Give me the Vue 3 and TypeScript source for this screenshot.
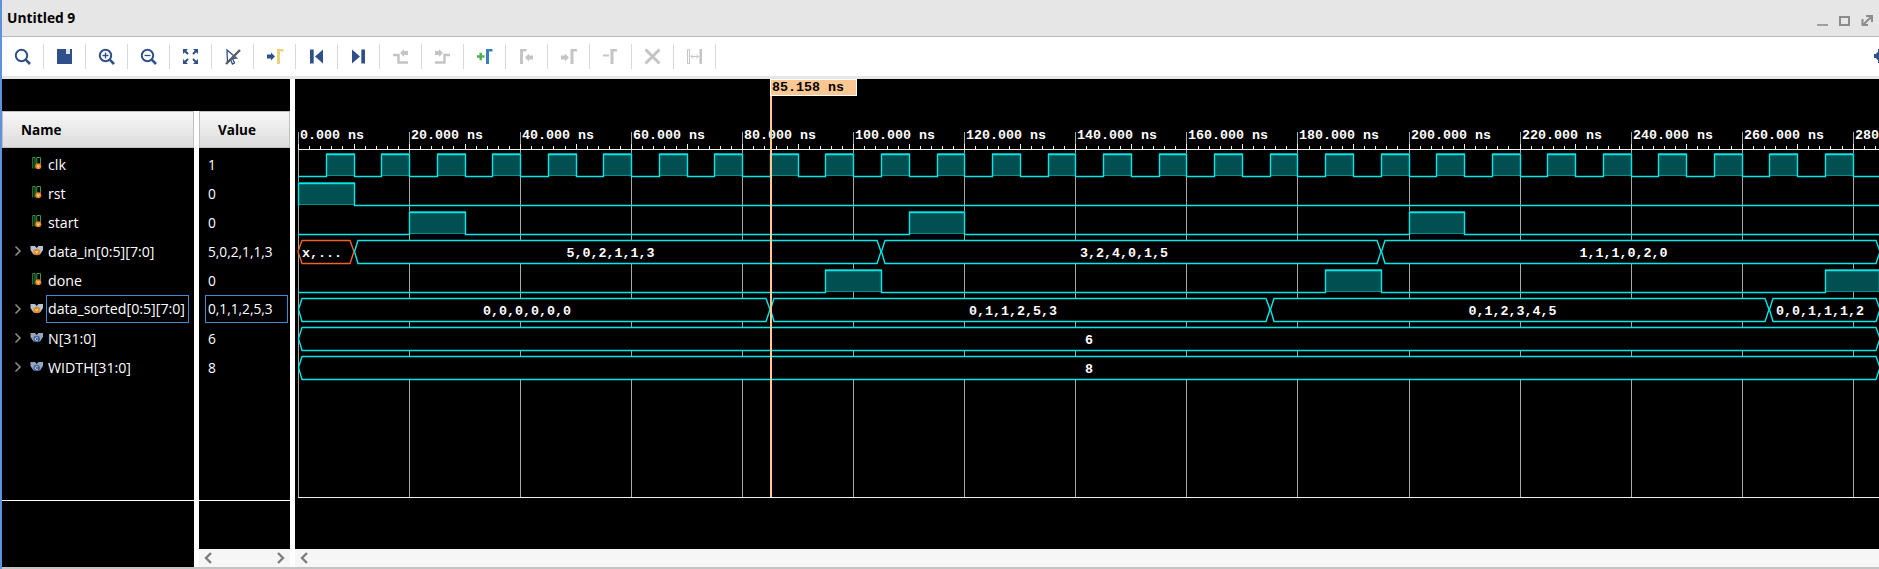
<template>
  <div class="window">
    <header class="title-bar">
      <span class="title">Untitled 9</span>
      <svg class="win-controls" width="58" height="16" viewBox="0 0 58 16">
        <rect x="2" y="14" width="11" height="2" fill="#a0a0a0" />
        <rect x="25" y="7" width="9" height="8" fill="none" stroke="#8c8c8c" stroke-width="2" />
        <path d="M47.5 9V15H53M51 6H57V12M49 14L56 7" fill="none" stroke="#8c8c8c" stroke-width="2" />
      </svg>
    </header>

    <div class="toolbar">
      <div v-for="tool in tools" :key="tool.id" class="tool">
        <svg width="25" height="25" viewBox="0 0 25 25" v-html="tool.svg"></svg>
      </div>
      <svg class="gear" width="5" height="14" viewBox="0 0 5 14">
        <circle cx="6" cy="7" r="4.5" fill="#2f5088" />
        <path d="M4 0H8V14H4ZM0 5H5V9H0Z" fill="#2f5088" />
      </svg>
    </div>

    <div class="panes">
      <section class="pane name-pane">
        <div class="spacer"></div>
        <div class="col-head name-head">Name</div>
        <div class="rows">
          <div v-for="s in signals" :key="s.name" class="row">
            <svg v-if="s.expandable" class="chev" width="8" height="12" viewBox="0 0 8 12">
              <path d="M1.5 1.5L6 6L1.5 10.5" fill="none" stroke="#8a8a8a" stroke-width="1.6" />
            </svg>
            <svg class="sig-icon" width="15" height="15" viewBox="0 0 15 15">
              <template v-if="s.kind === 'bit'">
                <path d="M2.8 11.5V0.5H5V11.5M6.8 8V0.5H10.5V7" fill="none" stroke="#3c9a48" stroke-width="1" />
                <circle cx="8.3" cy="9.3" r="3" fill="#e8871e" />
                <path d="M7.3 8.3L8.3 10.5L9.3 8.3" fill="none" stroke="#fff" stroke-width="0.7" />
              </template>
              <template v-else>
                <path d="M0.5 2H5L6.7 4L8.5 2H13V6L10 10.5H3.5L0.5 6Z" :fill="s.kind === 'bus' ? '#b0c4d6' : '#95a6ba'" />
                <circle cx="6.7" cy="8" r="3.3" :fill="s.kind === 'bus' ? '#e8871e' : '#44609a'" />
                <path v-if="s.kind === 'bus'" d="M5.7 7L6.7 9.2L7.7 7" fill="none" stroke="#fff" stroke-width="0.7" />
                <path v-else d="M7.9 7.1A1.5 1.5 0 1 0 7.9 8.9" fill="none" stroke="#fff" stroke-width="0.7" />
              </template>
            </svg>
            <span class="label" :class="{ selected: s.selected }">{{ s.name }}</span>
          </div>
        </div>
        <div class="pane-foot"></div>
      </section>

      <section class="pane value-pane">
        <div class="spacer"></div>
        <div class="col-head value-head">Value</div>
        <div class="rows">
          <div v-for="s in signals" :key="s.name" class="row value-row">
            <span class="label" :class="{ selected: s.selected }">{{ s.value }}</span>
          </div>
        </div>
        <div class="pane-foot"></div>
        <div class="scrollbar both">
          <svg width="10" height="14" viewBox="0 0 10 14"><path d="M8 2L3 7L8 12" class="scroll-arrow" /></svg>
          <svg width="10" height="14" viewBox="0 0 10 14"><path d="M2 2L7 7L2 12" class="scroll-arrow" /></svg>
        </div>
      </section>

      <section class="wave-pane">
        <svg class="wave" width="1584" height="470" viewBox="0 0 1584 470" shape-rendering="crispEdges">
          <!-- grid -->
          <line v-for="g in grid" :key="'g' + g" :x1="g" y1="53" :x2="g" y2="418" class="grid-line" />
          <line x1="3" y1="418.5" x2="1584" y2="418.5" class="ruler-line" />

          <!-- ruler -->
          <line x1="3" y1="70.5" x2="1584" y2="70.5" class="ruler-line" />
          <line v-for="t in ticks" :key="'t' + t.x" :x1="t.x" :y1="t.major ? 65 : 67" :x2="t.x" y2="70" class="ruler-line" />
          <text v-for="l in rulerLabels" :key="l.text" :x="l.x" y="60" class="mono ruler-text">{{ l.text }}</text>

          <!-- digital signals -->
          <g v-for="d in digital" :key="d.name">
            <rect
              v-for="p in d.pulses"
              :key="p.x"
              :x="p.x + 0.5"
              :y="d.low - 22.5"
              :width="p.w"
              height="22"
              class="pulse"
            />
            <path :d="d.path" class="trace" shape-rendering="auto" />
          </g>

          <!-- buses -->
          <g v-for="b in buses" :key="b.name">
            <g v-for="seg in b.segments" :key="seg.key">
              <path :d="seg.d" class="bus" :class="{ unknown: seg.unknown }" shape-rendering="auto" />
              <text :x="seg.textX" :y="b.low - 6" class="mono bus-text">{{ seg.label }}</text>
            </g>
          </g>

          <!-- cursor -->
          <rect :x="cursorX" y="0" width="2" height="418" class="cursor" />
          <rect :x="cursorX" y="0" width="86" height="16" class="cursor-flag" />
          <text :x="cursorX + 2" y="12" class="mono flag-text">85.158 ns</text>
        </svg>
        <div class="scrollbar">
          <svg width="10" height="14" viewBox="0 0 10 14"><path d="M8 2L3 7L8 12" class="scroll-arrow" /></svg>
        </div>
      </section>
    </div>
  </div>
</template>

<script setup lang="ts">
type Kind = 'bit' | 'bus' | 'const';

interface Signal {
  name: string;
  value: string;
  kind: Kind;
  expandable?: boolean;
  selected?: boolean;
}

const signals: Signal[] = [
  { name: 'clk', value: '1', kind: 'bit' },
  { name: 'rst', value: '0', kind: 'bit' },
  { name: 'start', value: '0', kind: 'bit' },
  { name: 'data_in[0:5][7:0]', value: '5,0,2,1,1,3', kind: 'bus', expandable: true },
  { name: 'done', value: '0', kind: 'bit' },
  { name: 'data_sorted[0:5][7:0]', value: '0,1,1,2,5,3', kind: 'bus', expandable: true, selected: true },
  { name: 'N[31:0]', value: '6', kind: 'const', expandable: true },
  { name: 'WIDTH[31:0]', value: '8', kind: 'const', expandable: true }
];

// waveform scale: 20 ns is 111.05 px, origin 3 px into the pane
const PX_PER_NS = 5.5525;
const ORIGIN = 3;
const WIDTH = 1584;
const END_NS = (WIDTH - ORIGIN) / PX_PER_NS;

const px = (ns: number) => Math.round(ORIGIN + ns * PX_PER_NS);

const cursorX = 475;

const grid: number[] = [];
const rulerLabels: { text: string; x: number }[] = [];
for (let ns = 0; ns <= 280; ns += 20) {
  grid.push(px(ns) + 0.5);
  rulerLabels.push({ text: `${ns}.000 ns`, x: px(ns) + 2 });
}

const ticks: { x: number; major: boolean }[] = [];
for (let i = 0; i * 2 <= 285; i++) {
  ticks.push({ x: px(i * 2) + 0.5, major: i % 5 === 0 });
}

function digitalTrace(name: string, low: number, highs: [number, number][]) {
  const top = low - 22;
  let d = `M${ORIGIN} ${low + 0.5}`;
  const pulses: { x: number; w: number }[] = [];
  for (const [from, to] of highs) {
    const a = px(from);
    const b = Math.min(px(to), WIDTH);
    d += `H${a + 0.5}V${top + 0.5}H${b + 0.5}V${low + 0.5}`;
    pulses.push({ x: a, w: b - a });
  }
  d += `H${WIDTH}`;
  return { name, low, path: d, pulses };
}

const clockHighs: [number, number][] = [];
for (let ns = 5; ns < END_NS; ns += 10) clockHighs.push([ns, ns + 5]);

const digital = [
  digitalTrace('clk', 97, clockHighs),
  digitalTrace('rst', 126, [[0, 10]]),
  digitalTrace('start', 155, [[20, 30], [110, 120], [200, 210]]),
  digitalTrace('done', 213, [[95, 105], [185, 195], [275, 300]])
];

interface BusPart {
  from: number;
  to: number;
  label: string;
  unknown?: boolean;
  at?: number;
}

function busTrace(name: string, low: number, parts: BusPart[]) {
  const top = low - 23;
  const mid = low - 11.5;
  const segments = parts.map((p, i) => {
    const x0 = px(p.from);
    const x1 = Math.min(px(p.to), WIDTH + 1);
    const ease = 4;
    const d = `M${x0 + (p.unknown ? 0 : 0.5)} ${mid}L${x0 + ease} ${top + 0.5}H${x1 - ease}L${x1} ${mid}L${x1 - ease} ${low + 0.5}H${x0 + ease}Z`;
    const center = (x0 + x1) / 2;
    const n = p.label.length;
    const textX = p.at ?? Math.max(center - 4 * n - 0.7 * (n - 1), x0 + 7);
    return { key: `${name}${i}`, d, label: p.label, unknown: p.unknown, textX };
  });
  return { name, low, segments };
}

const buses = [
  busTrace('data_in', 184, [
    { from: 0, to: 10, label: 'x,...', unknown: true, at: 7 },
    { from: 10, to: 105, label: '5,0,2,1,1,3' },
    { from: 105, to: 195, label: '3,2,4,0,1,5' },
    { from: 195, to: 300, label: '1,1,1,0,2,0' }
  ]),
  busTrace('data_sorted', 242, [
    { from: 0, to: 85, label: '0,0,0,0,0,0' },
    { from: 85, to: 175, label: '0,1,1,2,5,3' },
    { from: 175, to: 265, label: '0,1,2,3,4,5' },
    { from: 265, to: 300, label: '0,0,1,1,1,2' }
  ]),
  busTrace('N', 271, [{ from: 0, to: 300, label: '6' }]),
  busTrace('WIDTH', 300, [{ from: 0, to: 300, label: '8' }])
];

const NAVY = '#2f5088';
const GREY = '#c4c4c4';

const marker = (x: number, color: string) =>
  `<path d="M${x} 5H${x + 6.5}V7.5H${x + 3}V20H${x}Z" fill="${color}"/>`;
const arrowRight = (x: number, y: number, color: string) =>
  `<path d="M${x} ${y - 2}H${x + 4}V${y - 4}L${x + 8} ${y}L${x + 4} ${y + 4}V${y + 2}H${x}Z" fill="${color}"/>`;
const arrowLeft = (x: number, y: number, color: string) =>
  `<path d="M${x + 8} ${y - 2}H${x + 4}V${y - 4}L${x} ${y}L${x + 4} ${y + 4}V${y + 2}H${x + 8}Z" fill="${color}"/>`;
const lens = `<circle cx="11.5" cy="11.5" r="5.7" fill="none" stroke="${NAVY}" stroke-width="2"/><path d="M15.7 15.7L20 20" stroke="${NAVY}" stroke-width="2.6"/>`;

const tools = [
  { id: 'search', svg: lens },
  {
    id: 'save',
    svg: `<path d="M5 5H20V20H5Z" fill="${NAVY}"/><path d="M9 5H18V10H9Z" fill="#dfe5ef"/><path d="M9 5H14V10H9Z" fill="${NAVY}"/>`
  },
  {
    id: 'zoom-in',
    svg: `${lens}<path d="M8.5 11.5H14.5M11.5 8.5V14.5" stroke="${NAVY}" stroke-width="1.3"/>`
  },
  { id: 'zoom-out', svg: `${lens}<path d="M8.5 11.5H14.5" stroke="${NAVY}" stroke-width="1.3"/>` },
  {
    id: 'fit',
    svg: `<path d="M5 5H10L5 10ZM20 5V10L15 5ZM5 20V15L10 20ZM20 20H15L20 15Z" fill="${NAVY}"/><path d="M6 6L10 10M19 6L15 10M6 19L10 15M19 19L15 15" stroke="${NAVY}" stroke-width="2"/>`
  },
  {
    id: 'snap',
    svg: `<path d="M7 6L16.5 14L12.5 14.5L14.5 19L12.5 20L10.5 15.5L7.5 18Z" fill="#fff" stroke="${NAVY}" stroke-width="1.3"/><path d="M20 6L6 20" stroke="#5a5a5a" stroke-width="2.4"/>`
  },
  { id: 'goto-cursor', svg: arrowRight(5, 12.5, NAVY) + marker(15, '#e8d27a') },
  {
    id: 'first',
    svg: `<path d="M6 5.5H9.7V19.5H6Z" fill="${NAVY}"/><path d="M19 5.5V19.5L11 12.5Z" fill="${NAVY}"/>`
  },
  {
    id: 'last',
    svg: `<path d="M15.3 5.5H19V19.5H15.3Z" fill="${NAVY}"/><path d="M6 5.5V19.5L14 12.5Z" fill="${NAVY}"/>`
  },
  {
    id: 'prev-edge',
    svg: `<path d="M5 11H10.5V18.5H20" fill="none" stroke="${GREY}" stroke-width="2.4"/>${arrowLeft(12, 9, GREY)}`
  },
  {
    id: 'next-edge',
    svg: `<path d="M5 18.5H14.5V11H20" fill="none" stroke="${GREY}" stroke-width="2.4"/>${arrowRight(5, 9, GREY)}`
  },
  {
    id: 'add-marker',
    svg: `<path d="M5 12.5H12.5M8.7 8.7V16.3" stroke="#4fb04f" stroke-width="2.4"/>${marker(14, '#3a80b8')}`
  },
  { id: 'prev-marker', svg: marker(6, GREY) + arrowLeft(11, 13.5, GREY) },
  { id: 'next-marker', svg: arrowRight(5, 13.5, GREY) + marker(14.5, GREY) },
  { id: 'remove-marker', svg: `<path d="M5 11.5H11" stroke="${GREY}" stroke-width="2"/>${marker(12.5, GREY)}` },
  { id: 'remove-all', svg: `<path d="M5.5 5.5L19.5 19.5M19.5 5.5L5.5 19.5" stroke="${GREY}" stroke-width="3"/>` },
  {
    id: 'spacing',
    svg: `<path d="M5.5 5.5H7.5V19.5H5.5Z" fill="none" stroke="${GREY}"/><path d="M17.5 5H20V20H17.5Z" fill="${GREY}"/><path d="M9 12.5H16.5M9 12.5L11 10.5M9 12.5L11 14.5M16.5 12.5L14.5 10.5M16.5 12.5L14.5 14.5" fill="none" stroke="${GREY}"/>`
  }
];
</script>

<style scoped>
.window {
  width: 1879px;
  height: 569px;
  display: flex;
  flex-direction: column;
  overflow: hidden;
  background: #fff;
  border-left: 2px solid #5f92dc;
  box-sizing: border-box;
  font-family: "Open Sans", "Noto Sans", sans-serif;
}

.title-bar {
  flex: 0 0 37px;
  box-sizing: border-box;
  display: flex;
  align-items: center;
  justify-content: space-between;
  padding: 0 6px 1px 7px;
  background: #e6e6e6;
  border-bottom: 1px solid #b8b8b8;
  margin-left: -2px;
}

.title {
  font-size: 13.8px;
  font-weight: 700;
  color: #000;
}

.toolbar {
  flex: 0 0 39px;
  display: flex;
  align-items: center;
  background: #fff;
}

.tool {
  width: 41px;
  height: 25px;
  flex: none;
  display: flex;
  justify-content: center;
  border-right: 1px solid #d9d9d9;
}

.gear {
  margin-left: auto;
  margin-top: -1px;
}

.panes {
  flex: 1;
  min-height: 0;
  display: flex;
  border-top: 3px solid #e6e6e6;
  padding-bottom: 2px;
  background: #fff;
  box-shadow: inset 0 -2px 0 #c4c4c4;
}

.pane {
  display: flex;
  flex-direction: column;
  background: #000;
  flex: none;
  color: #fff;
}

.name-pane {
  width: 192px;
  margin-right: 5px;
}

.value-pane {
  width: 91px;
  margin-right: 5px;
}

.spacer {
  height: 32px;
  flex: none;
  background: #000;
}

.name-pane .spacer {
  margin-right: -5px;
}

.col-head {
  height: 37px;
  flex: none;
  box-sizing: border-box;
  display: flex;
  align-items: center;
  padding-left: 18px;
  background: linear-gradient(#f7f7f7, #dcdcdc);
  border: 1px solid #c0c0c0;
  color: #000;
  font-size: 13.5px;
  font-weight: 700;
}

.rows {
  padding-top: 2px;
  height: 353px;
  flex: none;
  box-sizing: border-box;
  border-bottom: 1px solid #fff;
}

.row {
  height: 29px;
  display: flex;
  align-items: center;
  position: relative;
  padding-left: 28px;
  font-size: 14.2px;
}

.value-row {
  padding-left: 6px;
  font-size: 13.7px;
}

.chev {
  position: absolute;
  left: 12px;
  top: 8px;
}

.sig-icon {
  flex: none;
  margin-right: 3px;
}

.label {
  padding: 3px 1px;
  border: 1px solid transparent;
  white-space: nowrap;
  margin-left: -2px;
  line-height: 20px;
  height: 28px;
  box-sizing: border-box;
}

.value-row .label {
  margin-left: 0;
  padding-left: 2px;
}

.label.selected {
  border-color: #3a8ed4;
  width: 83px;
  margin-top: -2px;
}

.name-pane .label.selected {
  width: 143px;
}

.pane-foot {
  flex: 1;
}

.scrollbar {
  flex: 0 0 18px;
  box-sizing: border-box;
  display: flex;
  align-items: center;
  padding: 0 4px;
  background: #f6f6f6;
}

.scrollbar.both {
  justify-content: space-between;
}

.scroll-arrow {
  fill: none;
  stroke: #7d7d7d;
  stroke-width: 2.4;
}

.wave-pane {
  flex: 1;
  min-width: 0;
  display: flex;
  flex-direction: column;
  overflow: hidden;
}

.wave {
  display: block;
  background: #000;
  flex: none;
}

.grid-line {
  stroke: #a8a8a8;
  stroke-width: 1;
}

.ruler-line {
  stroke: #f0f0f0;
  stroke-width: 1;
}

.mono {
  font-family: "Liberation Mono", monospace;
  font-size: 13.33px;
  font-weight: 700;
}

.ruler-text,
.bus-text {
  fill: #fff;
}

.flag-text {
  fill: #000;
}

.pulse {
  fill: #014f50;
  stroke: #0a8a8a;
  stroke-width: 1;
}

.trace {
  fill: none;
  stroke: #00e8e8;
  stroke-width: 1.4;
}

.bus {
  fill: #000;
  stroke: #00e8e8;
  stroke-width: 1.4;
}

.bus.unknown {
  stroke: #f0602c;
}

.cursor {
  fill: #ffc896;
}

.cursor-flag {
  fill: #fdc793;
  stroke: #fff;
  stroke-width: 1;
}
</style>
